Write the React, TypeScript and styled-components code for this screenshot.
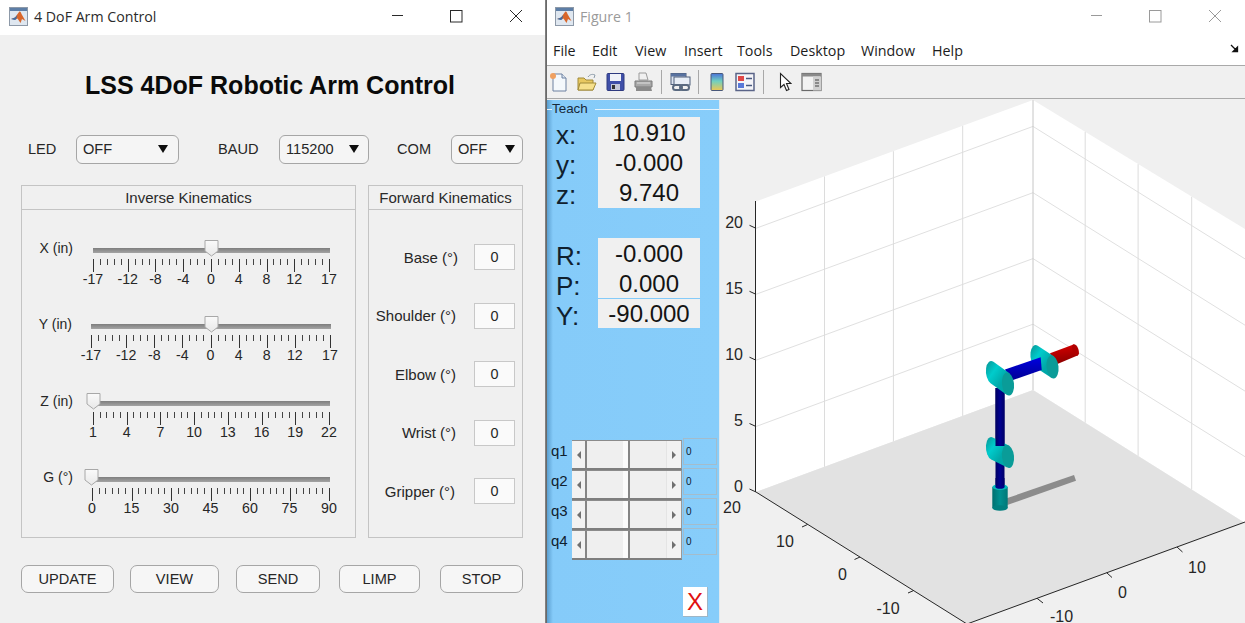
import React from "react";
import styled, { createGlobalStyle } from "styled-components";

const Global = createGlobalStyle`
  html, body { margin: 0; padding: 0; background: #f0f0f0; }
  #root { width: 1245px; height: 623px; overflow: hidden; }
  * { box-sizing: border-box; }
`;

const Screen = styled.div`
  display: flex;
  width: 1245px;
  height: 623px;
  overflow: hidden;
  font-family: "Liberation Sans", Arial, sans-serif;
  color: #262626;
`;

const LeftWindow = styled.div`
  width: 545px;
  height: 623px;
  display: flex;
  flex-direction: column;
  flex: none;
  background: #f0f0f0;
`;
const Divider = styled.div`
  width: 2px;
  flex: none;
  background: linear-gradient(90deg, #8a8a8a, #5f5f5f);
`;
const FigureWindow = styled.div`
  flex: 1;
  min-width: 0;
  display: flex;
  flex-direction: column;
`;

const TitleBar = styled.div<{ $pad: number }>`
  height: 35px;
  flex: none;
  background: #fff;
  display: flex;
  align-items: center;
  padding-left: ${p => p.$pad}px;
  padding-bottom: 3px;
`;
const TitleText = styled.span<{ $dim?: boolean }>`
  font-family: "Open Sans", "Noto Sans", sans-serif;
  font-size: 14.2px;
  margin-left: 6px;
  color: ${p => (p.$dim ? "#9a9a9a" : "#2b2b2b")};
`;
const WinControls = styled.div<{ $gap: number; $right: number }>`
  margin-left: auto;
  display: flex;
  align-items: center;
  gap: ${p => p.$gap}px;
  padding-right: ${p => p.$right}px;
`;

const MainTitle = styled.h1`
  margin: 0;
  height: 100px;
  padding-top: 35px;
  text-align: center;
  font-size: 25px;
  line-height: 30px;
  font-weight: 700;
  color: #0a0a0a;
  padding-right: 5px;
`;

const ControlRow = styled.div`
  display: flex;
  align-items: center;
  height: 28px;
  padding-left: 28px;
`;
const ControlLabel = styled.span<{ $ml?: number; $w: number }>`
  font-size: 14.6px;
  width: ${p => p.$w}px;
  margin-left: ${p => p.$ml || 0}px;
`;
const Dropdown = styled.div<{ $w: number }>`
  width: ${p => p.$w}px;
  height: 29px;
  border: 1px solid #a6a6a6;
  border-radius: 6px;
  background: #f5f5f5;
  display: flex;
  align-items: center;
  justify-content: space-between;
  padding: 0 7px 0 6px;
  font-size: 14.6px;
`;
const Caret = styled.i<{ $mr?: number }>`
  width: 0;
  height: 0;
  border-left: 5.5px solid transparent;
  border-right: 5.5px solid transparent;
  border-top: 8px solid #0d0d0d;
  margin-right: ${p => p.$mr || 0}px;
`;

const Panels = styled.div`
  display: flex;
  gap: 12px;
  padding-left: 21px;
  margin-top: 22px;
`;
const Panel = styled.section<{ $w: number }>`
  width: ${p => p.$w}px;
  height: 353px;
  border: 1px solid #c4c4c4;
  display: flex;
  flex-direction: column;
`;
const PanelHead = styled.header`
  height: 24px;
  flex: none;
  border-bottom: 1px solid #c4c4c4;
  text-align: center;
  font-size: 15px;
  line-height: 23px;
  white-space: nowrap;
  color: #2a2a2a;
`;
const SliderList = styled.div`
  padding-top: 30px;
  display: flex;
  flex-direction: column;
`;
const SliderRow = styled.div`
  display: flex;
  height: 76.3px;
`;
const SliderLabel = styled.div<{ $w: number }>`
  width: ${p => p.$w}px;
  flex: none;
  text-align: right;
  font-size: 14px;
  line-height: 16px;
`;
const SliderBody = styled.div<{ $ml: number; $w: number }>`
  position: relative;
  margin-left: ${p => p.$ml}px;
  width: ${p => p.$w}px;
`;
const Track = styled.div`
  height: 5px;
  margin-top: 8px;
  background: linear-gradient(180deg, #7e7e7e, #a4a4a4);
`;
const Thumb = styled.svg<{ $left: number }>`
  position: absolute;
  left: ${p => p.$left}px;
  top: 0;
`;
const TickSvg = styled.svg`
  display: block;
  margin-top: 6px;
`;
const TickLabels = styled.div`
  display: flex;
  height: 16px;
  line-height: 15px;
`;
const TickLabel = styled.span<{ $gap: number }>`
  flex: none;
  width: 0;
  margin-left: ${p => p.$gap}px;
  white-space: nowrap;
  display: flex;
  justify-content: center;
  font-size: 14.2px;
`;

const JointList = styled.div`
  padding-top: 18px;
  display: flex;
  flex-direction: column;
`;
const JointRow = styled.div<{ $gap: number }>`
  height: 58.5px;
  display: flex;
  align-items: center;
  justify-content: flex-end;
  gap: ${p => p.$gap}px;
  padding-right: 7px;
`;
const JointLabel = styled.span`
  font-size: 15px;
`;
const ValueBox = styled.div`
  width: 41px;
  height: 26px;
  border: 1px solid #c8c8c8;
  background: #fafafa;
  display: flex;
  align-items: center;
  justify-content: center;
  font-size: 14.4px;
`;

const ButtonRow = styled.div`
  display: flex;
  padding-left: 21px;
  margin-top: 27px;
`;
const PushButton = styled.button<{ $w: number; $ml: number }>`
  width: ${p => p.$w}px;
  margin-left: ${p => p.$ml}px;
  height: 28px;
  border: 1px solid #a6a6a6;
  border-radius: 7px;
  background: #f6f6f6;
  font-family: inherit;
  font-size: 14.6px;
  color: #262626;
  padding: 0;
`;

const MenuBar = styled.nav`
  height: 31px;
  flex: none;
  background: #fff;
  border-bottom: 1px solid #a9a9a9;
  display: flex;
  align-items: center;
  position: relative;
`;
const MenuItem = styled.span<{ $w: number }>`
  font-family: "Open Sans", "Noto Sans", sans-serif;
  font-size: 14.3px;
  color: #1c1c1c;
  width: ${p => p.$w}px;
  flex: none;
  padding-left: 6px;
`;
const CornerArrow = styled.svg`
  position: absolute;
  right: 6px;
  top: 9px;
`;

const Toolbar = styled.div`
  height: 33px;
  flex: none;
  background: #f0f0f0;
  border-bottom: 1px solid #a9a9a9;
  display: flex;
  align-items: center;
  padding-left: 2px;
`;
const ToolSep = styled.span<{ $l: number; $r: number }>`
  width: 1px;
  height: 24px;
  background: #a8a8a8;
  margin: 0 ${p => p.$r}px 0 ${p => p.$l}px;
`;
const ToolSlot = styled.svg<{ $ml?: number }>`
  flex: none;
  margin-left: ${p => p.$ml || 0}px;
`;

const Content = styled.div`
  flex: 1;
  display: flex;
  min-height: 0;
  background: #f0f0f0;
  padding-top: 1px;
`;
const TeachPanel = styled.aside`
  width: 173px;
  flex: none;
  background: linear-gradient(90deg, #5b9fd0 0, #85cbf9 6px, #87cdfa 100%);
  display: flex;
  flex-direction: column;
  border-right: 1px solid #dfe9f0;
`;
const TeachHead = styled.div`
  display: flex;
  align-items: center;
  height: 16px;
  margin-top: 1px;
  font-size: 13.4px;
  line-height: 16px;
  color: #17293a;
`;
const TeachTick = styled.span`
  width: 5px;
  height: 1px;
  background: #e6f2fb;
`;
const TeachRule = styled.span`
  flex: 1;
  height: 1px;
  background: #eaf4fb;
  margin-left: 7px;
`;
const ReadoutGroup = styled.div<{ $mt: number }>`
  display: grid;
  grid-template-columns: 51px 102px;
  grid-auto-rows: 30.2px;
  margin-top: ${p => p.$mt}px;
`;
const ReadoutLabel = styled.span`
  font-size: 26px;
  line-height: 36px;
  padding-left: 9px;
  color: #10202e;
`;
const ReadoutValue = styled.span<{ $rule?: boolean }>`
  background: #f0f0f0;
  font-size: 24px;
  line-height: 32px;
  text-align: center;
  color: #141414;
  box-shadow: ${p => (p.$rule ? "inset 0 1px 0 #85cbf9" : "none")};
`;
const JogList = styled.div`
  margin-top: 112px;
  display: flex;
  flex-direction: column;
`;
const JogRow = styled.div`
  height: 30px;
  display: flex;
`;
const JogLabel = styled.span`
  width: 25px;
  flex: none;
  padding-left: 4px;
  font-size: 15px;
  line-height: 22px;
  color: #10202e;
`;
const ScrollBar = styled.div`
  width: 110px;
  height: 30px;
  flex: none;
  display: flex;
  background: #f0f0f0;
  border-top: 1px solid #8b8b8b;
  border-bottom: 2px solid #7e7e7e;
  border-right: 1px solid #9a9a9a;
`;
const ScrollButton = styled.div<{ $left?: boolean }>`
  width: 15px;
  flex: none;
  display: flex;
  align-items: center;
  justify-content: center;
  background: #f2f2f2;
  border-right: ${p => (p.$left ? "2px solid #858585" : "0")};
  border-left: ${p => (p.$left ? "0" : "1px solid #e4e4e4")};
`;
const ArrowLeft = styled.i`
  border-top: 4px solid transparent;
  border-bottom: 4px solid transparent;
  border-right: 4px solid #707070;
`;
const ArrowRight = styled.i`
  border-top: 4px solid transparent;
  border-bottom: 4px solid transparent;
  border-left: 4px solid #707070;
`;
const ScrollTrack = styled.div`
  flex: 1;
  background: #efefef;
`;
const ScrollThumb = styled.div`
  width: 7px;
  flex: none;
  background: #fbfbfb;
  border-right: 2px solid #858585;
`;
const JogValue = styled.div`
  width: 34px;
  height: 27px;
  margin: -2px 0 0 1px;
  border: 1px solid #a4bccb;
  font-size: 10px;
  line-height: 25px;
  padding-left: 2px;
  color: #10202e;
`;
const CloseWrap = styled.div`
  margin-top: 27px;
  padding-left: 136px;
`;
const CloseBtn = styled.button`
  width: 25px;
  height: 30px;
  padding: 0;
  background: #fff;
  border: 0;
  border-right: 1px solid #9eb6c6;
  border-bottom: 1px solid #9eb6c6;
  color: #e01010;
  font-family: inherit;
  font-size: 24px;
  line-height: 30px;
`;
const PlotArea = styled.div`
  flex: 1;
  min-width: 0;
  background: #f0f0f0;
`;
const PlotSvg = styled.svg`
  display: block;
`;

const MatlabIcon = () => (
  <svg width="19" height="19" viewBox="0 0 19 19">
    <rect x=".5" y=".5" width="18" height="18" fill="#dfe7f0" stroke="#8d99a8" />
    <rect x="1" y="1" width="17" height="3" fill="#5d7ea6" />
    <path d="M2 12l4-1.5L10 5c1-1 1.500-.5 2.500 2l4 7-3.500-2-1.500 4-3-4.500-2 1z" fill="#d9662a" />
    <path d="M2 12l4-1.500L8.500 8 7 12.500 5.500 13z" fill="#3c6ea8" />
  </svg>
);

const WinGlyphs: React.FC<{ color: string }> = ({ color }) => (
  <>
    <svg width="13" height="13" viewBox="0 0 13 13"><path d="M1 5.500h11" stroke={color} strokeWidth="1" /></svg>
    <svg width="13" height="13" viewBox="0 0 13 13"><rect x=".5" y=".5" width="11.500" height="11.500" fill="none" stroke={color} /></svg>
    <svg width="14" height="14" viewBox="0 0 14 14"><path d="M1 1l12 12M13 1L1 13" stroke={color} strokeWidth="1" /></svg>
  </>
);

type SliderDef = {
  label: string; labelW: number; ml: number; w: number; min: number; max: number;
  marks: number[]; minorStep: number; thumb: number;
};
const xMarks = [-17, -12, -8, -4, 0, 4, 8, 12, 17];
const sliders: SliderDef[] = [
  { label: "X (in)", labelW: 51, ml: 20, w: 237, min: -17, max: 17, marks: xMarks, minorStep: 1, thumb: 111 },
  { label: "Y (in)", labelW: 50, ml: 19, w: 240, min: -17, max: 17, marks: xMarks, minorStep: 1, thumb: 113 },
  { label: "Z (in)", labelW: 51, ml: 20, w: 237, min: 1, max: 22, marks: [1, 4, 7, 10, 13, 16, 19, 22], minorStep: 0.6, thumb: -7 },
  { label: "G (°)", labelW: 51, ml: 19, w: 238, min: 0, max: 90, marks: [0, 15, 30, 45, 60, 75, 90], minorStep: 2.5, thumb: -8 },
];

const Slider: React.FC<{ s: SliderDef }> = ({ s }) => {
  const px = (v: number) => ((v - s.min) / (s.max - s.min)) * (s.w - 1);
  const lines: React.ReactNode[] = [];
  const count = Math.round((s.max - s.min) / s.minorStep);
  for (let i = 0; i <= count; i++) {
    const x = Math.round(px(s.min + i * s.minorStep)) + 0.5;
    lines.push(<line key={`m${i}`} x1={x} x2={x} y1="0" y2="6" stroke="#444" />);
  }
  s.marks.forEach(m => {
    const x = Math.round(px(m)) + 0.5;
    lines.push(<line key={`M${m}`} x1={x} x2={x} y1="0" y2="13" stroke="#333" />);
  });
  return (
    <SliderRow>
      <SliderLabel $w={s.labelW}>{s.label}</SliderLabel>
      <SliderBody $ml={s.ml} $w={s.w}>
        <Track />
        <Thumb $left={s.thumb} width="15" height="17" viewBox="0 0 15 17">
          <defs>
            <linearGradient id="thumbFill" x1="0" x2="0" y1="0" y2="1">
              <stop offset="0" stopColor="#fafafa" />
              <stop offset="1" stopColor="#e8e8e8" />
            </linearGradient>
          </defs>
          <path d="M1 .5h13v10.500L7.500 16 1 11z" fill="url(#thumbFill)" stroke="#a8a8a8" />
        </Thumb>
        <TickSvg width={s.w} height="13">{lines}</TickSvg>
        <TickLabels>
          {s.marks.map((m, i) => (
            <TickLabel key={m} $gap={i === 0 ? 0 : px(m) - px(s.marks[i - 1])}>{m}</TickLabel>
          ))}
        </TickLabels>
      </SliderBody>
    </SliderRow>
  );
};

const Cylinder: React.FC<{ ax: number; ay: number; bx: number; by: number; rx: number; ry: number; rot: number; face: string }> =
  ({ ax, ay, bx, by, rx, ry, rot, face }) => {
    const r = (rot * Math.PI) / 180;
    const dx = bx - ax;
    const dy = by - ay;
    const lx = dx * Math.cos(r) + dy * Math.sin(r);
    const ly = -dx * Math.sin(r) + dy * Math.cos(r);
    const nx = ly;
    const ny = -lx;
    const k = Math.hypot(rx * nx, ry * ny);
    const px = (rx * rx * nx) / k;
    const py = (ry * ry * ny) / k;
    const ux = px * Math.cos(r) - py * Math.sin(r);
    const uy = px * Math.sin(r) + py * Math.cos(r);
    const body = `M${ax + ux} ${ay + uy}L${bx + ux} ${by + uy}L${bx - ux} ${by - uy}L${ax - ux} ${ay - uy}A${rx} ${ry} ${rot} 0 1 ${ax + ux} ${ay + uy}Z`;
    return (
      <g>
        <path d={body} fill="url(#tealBody)" />
        <ellipse cx={bx} cy={by} rx={rx} ry={ry} transform={`rotate(${rot} ${bx} ${by})`} fill={face} />
      </g>
    );
  };

const AxisText: React.FC<{ x: number; y: number; a?: "middle" | "end"; children: React.ReactNode }> = ({ x, y, a = "middle", children }) => (
  <text x={x} y={y + 6} textAnchor={a} fontSize="16" fontFamily="'Liberation Sans', Arial, sans-serif" fill="#262626">{children}</text>
);

const Plot = () => {
  const leftZ = [[228.3,126.4],[294.3,192.7],[360.2,258.6],[426.5,324.2]];
  const rightBack = [126.4,192.7,258.6,324.2];
  const leftV = [824.5,893.4,962.7];
  const rightV = [1085.2,1138.1,1191.7];
  return (
    <PlotSvg width="525" height="523" viewBox="720 100 525 523">
      <defs>
        <linearGradient id="tealBody" x1="0" x2="0.6" y1="0.1" y2="0.7">
          <stop offset="0" stopColor="#089c9c" />
          <stop offset=".45" stopColor="#00cccc" />
          <stop offset="1" stopColor="#00a8a8" />
        </linearGradient>
        <linearGradient id="baseCyl" x1="0" x2="1" y1="0" y2="0">
          <stop offset="0" stopColor="#006f6f" />
          <stop offset=".5" stopColor="#009090" />
          <stop offset="1" stopColor="#007878" />
        </linearGradient>
        <linearGradient id="navy" x1="0" x2="1" y1="0" y2="0">
          <stop offset="0" stopColor="#000060" />
          <stop offset=".5" stopColor="#000090" />
          <stop offset="1" stopColor="#000068" />
        </linearGradient>
        <linearGradient id="blueBar" x1="0" x2="0" y1="0" y2="1">
          <stop offset="0" stopColor="#0000e0" />
          <stop offset="1" stopColor="#000090" />
        </linearGradient>
        <linearGradient id="redBar" x1="0" x2="0.2" y1="0" y2="1">
          <stop offset="0" stopColor="#dd0000" />
          <stop offset="1" stopColor="#8a0000" />
        </linearGradient>
      </defs>
      <polygon points="756,201.500 1033,100 1033,390 756,492" fill="#fff" />
      <polygon points="1033,100 1245,229 1245,523 1033,390" fill="#fff" />
      <polygon points="756,492 1033,390 1245,523 967,624" fill="#e2e2e2" />
      {leftZ.map(([a, b]) => <line key={a} x1="756" y1={a} x2="1033" y2={b} stroke="#e0e0e0" />)}
      {rightBack.map(b => <line key={b} x1="1033" y1={b} x2="1245" y2={b + 132.5} stroke="#e0e0e0" />)}
      {leftV.map(x => (
        <line key={x} x1={x} x2={x} y1={201.5 - (x - 756) * 0.366} y2={492 - (x - 756) * 0.368} stroke="#dcdcdc" />
      ))}
      {rightV.map(x => (
        <line key={x} x1={x} x2={x} y1={100 + (x - 1033) * 0.61} y2={390 + (x - 1033) * 0.627} stroke="#dcdcdc" />
      ))}
      <line x1="1033" x2="1033" y1="100" y2="390" stroke="#c6c6c6" />

      <g stroke="#262626" strokeWidth="1" fill="none">
        <line x1="755.500" x2="755.500" y1="201" y2="492" />
        <line x1="756" y1="492" x2="967" y2="624" />
        <line x1="967" y1="624" x2="1245" y2="522" />
        <path d="M749.500 225.300L756 228.300M749.500 291.300L756 294.300M749.500 357.200L756 360.200M749.500 423.500L756 426.500M749.500 489L756 492" />
        <path d="M807.700 524.400L802 527M860 557L854.500 559.500M913.500 590.600L908 593" />
        <path d="M1177 547L1182.500 552M1106.700 572.700L1112 577.500M1037 598.300L1043 603" />
      </g>
      <AxisText x={743} y={222} a="end">20</AxisText>
      <AxisText x={743} y={288} a="end">15</AxisText>
      <AxisText x={743} y={354} a="end">10</AxisText>
      <AxisText x={743} y={420} a="end">5</AxisText>
      <AxisText x={743} y={486} a="end">0</AxisText>
      <AxisText x={732} y={507}>20</AxisText>
      <AxisText x={785} y={541}>10</AxisText>
      <AxisText x={842.500} y={574}>0</AxisText>
      <AxisText x={888} y={608}>-10</AxisText>
      <AxisText x={1197} y={567}>10</AxisText>
      <AxisText x={1122.500} y={592}>0</AxisText>
      <AxisText x={1061.500} y={616}>-10</AxisText>

      <polygon points="1006.700,498.300 1074,475 1076,480.700 1007.300,505" fill="#8c8c8c" />
      <rect x="995.500" y="388" width="9" height="99" fill="url(#navy)" />
      <polygon points="1050,353.300 1073.500,344.500 1077.500,355.500 1055,365" fill="url(#redBar)" />
      <ellipse cx="1075.500" cy="350" rx="3" ry="6" transform="rotate(-20 1075.500 350)" fill="#b00000" />
      <Cylinder ax={992} ay={448.500} bx={1008} by={456.500} rx={6} ry={11.500} rot={-6} face="#0a9c98" />
      <rect x="995.500" y="388" width="9" height="58" fill="url(#navy)" />
      <Cylinder ax={1036.500} ay={356.500} bx={1052.500} by={367} rx={6} ry={11.500} rot={-6} face="#0a9c98" />
      <polygon points="1005,369.500 1040.700,357.300 1041.700,370 1010,381" fill="url(#blueBar)" />
      <Cylinder ax={992} ay={372.500} bx={1008} by={384} rx={6} ry={11.500} rot={-6} face="#0a9c98" />
      <rect x="992.300" y="487" width="15.400" height="21" fill="url(#baseCyl)" />
      <ellipse cx="1000" cy="508" rx="7.700" ry="2.800" fill="#007f7f" />
      <ellipse cx="1000" cy="487" rx="7.700" ry="3" fill="#00bcbc" />
      <rect x="995.500" y="478" width="9" height="9" fill="url(#navy)" />
      <ellipse cx="1000" cy="487" rx="4.500" ry="1.800" fill="#00008a" />
    </PlotSvg>
  );
};

const NewIcon = () => (
  <ToolSlot width="20" height="20" viewBox="0 0 20 20">
    <path d="M4 2h9l4 4v13H4z" fill="#f4f8fc" stroke="#6d80a0" />
    <path d="M13 2v4h4" fill="#dde6f0" stroke="#6d80a0" />
    <circle cx="4" cy="4" r="3" fill="#f0a060" />
  </ToolSlot>
);
const OpenIcon = () => (
  <ToolSlot $ml={8} width="20" height="20" viewBox="0 0 20 20">
    <path d="M11 5c2-3 5-3 7-2l-1 3" fill="none" stroke="#8a9aa8" />
    <path d="M1 6h6l2 2h7v10H1z" fill="#e8c860" stroke="#a08a3a" />
    <path d="M1 18l2-7h16l-3 7z" fill="#f6e08c" stroke="#a08a3a" />
  </ToolSlot>
);
const SaveIcon = () => (
  <ToolSlot $ml={9} width="19" height="20" viewBox="0 0 19 20">
    <rect x="1" y="1.500" width="17" height="17" rx="1" fill="#3f4fa8" stroke="#2e3a80" />
    <rect x="4" y="2" width="11" height="7" fill="#f0f2f8" />
    <rect x="5" y="12" width="9" height="6" fill="#c4c8d8" />
    <rect x="6" y="13" width="3" height="4" fill="#333" />
  </ToolSlot>
);
const PrintIcon = () => (
  <ToolSlot $ml={9} width="19" height="20" viewBox="0 0 19 20">
    <path d="M5 1h7l2 7H5z" fill="#f0f0f0" stroke="#9a9a9a" />
    <path d="M1 9h17v6H1z" fill="#a8a8a8" stroke="#7a7a7a" />
    <path d="M2 15h15l1 4H2z" fill="#8a8a8a" />
    <path d="M3 11h13" stroke="#e0e0e0" />
  </ToolSlot>
);
const LinkIcon = () => (
  <ToolSlot width="21" height="20" viewBox="0 0 21 20">
    <rect x="1" y="1.500" width="15" height="11" fill="#dce4f0" stroke="#4e5f7a" />
    <rect x="1" y="1.500" width="15" height="3" fill="#5872a0" />
    <rect x="4" y="5" width="16" height="8" fill="#e8eef6" stroke="#4e5f7a" />
    <rect x="3" y="13" width="9" height="5" rx="2.500" fill="none" stroke="#5a6a80" strokeWidth="2" />
    <rect x="10" y="13" width="9" height="5" rx="2.500" fill="none" stroke="#5a6a80" strokeWidth="2" />
  </ToolSlot>
);
const ColorbarIcon = () => (
  <ToolSlot width="14" height="20" viewBox="0 0 14 20">
    <defs>
      <linearGradient id="cb" x1="0" x2="0" y1="0" y2="1">
        <stop offset="0" stopColor="#4a72d8" />
        <stop offset=".45" stopColor="#70d0c0" />
        <stop offset="1" stopColor="#f0c850" />
      </linearGradient>
    </defs>
    <rect x="1" y="1.500" width="12" height="17" rx="1" fill="url(#cb)" stroke="#48587a" />
  </ToolSlot>
);
const LegendIcon = () => (
  <ToolSlot $ml={11} width="20" height="20" viewBox="0 0 20 20">
    <rect x="1" y="1.500" width="18" height="17" fill="#f4f4f8" stroke="#5a6488" strokeWidth="1.500" />
    <rect x="3" y="4" width="6" height="5" fill="#e04848" />
    <rect x="3" y="11" width="6" height="5" fill="#5878d8" />
    <path d="M11 6.500h6M11 13.500h6" stroke="#4a5a80" strokeWidth="1.500" />
  </ToolSlot>
);
const CursorIcon = () => (
  <ToolSlot width="13" height="20" viewBox="0 0 13 20">
    <path d="M1.500 1.500v14l3.500-3 2.500 6 2.500-1-2.500-6h4.500z" fill="#fff" stroke="#222" strokeWidth="1.100" />
  </ToolSlot>
);
const PanelIcon = () => (
  <ToolSlot $ml={9} width="21" height="20" viewBox="0 0 21 20">
    <rect x="1" y="1.500" width="19" height="17" fill="#f2f2f2" stroke="#6a6a6a" strokeWidth="1.200" />
    <rect x="1" y="1.500" width="19" height="3" fill="#8a8a8a" />
    <rect x="12" y="4.500" width="8" height="14" fill="#d0d0d0" />
    <path d="M14 8h4M14 11h4M14 14h4" stroke="#444" />
  </ToolSlot>
);

const readouts1 = [["x:", "10.910"], ["y:", "-0.000"], ["z:", "9.740"]];
const readouts2 = [["R:", "-0.000"], ["P:", "0.000"], ["Y:", "-90.000"]];
const menus: [string, number][] = [["File",39],["Edit",43],["View",49],["Insert",53],["Tools",53],["Desktop",71],["Window",71],["Help",60]];
const joints: [string, number][] = [["Base (°)",16],["Shoulder (°)",18],["Elbow (°)",18],["Wrist (°)",18],["Gripper (°)",19]];
const buttons: [string, number, number][] = [["UPDATE",93,0],["VIEW",89,16],["SEND",84,17],["LIMP",81,19],["STOP",83,20]];

export default function App() {
  return (
    <>
      <Global />
      <Screen>
        <LeftWindow>
          <TitleBar $pad={9}>
            <MatlabIcon />
            <TitleText>4 DoF Arm Control</TitleText>
            <WinControls $gap={46} $right={22}><WinGlyphs color="#2a2a2a" /></WinControls>
          </TitleBar>
          <MainTitle>LSS 4DoF Robotic Arm Control</MainTitle>
          <ControlRow>
            <ControlLabel $w={48}>LED</ControlLabel>
            <Dropdown $w={103}>OFF<Caret $mr={3} /></Dropdown>
            <ControlLabel $ml={39} $w={61}>BAUD</ControlLabel>
            <Dropdown $w={90}>115200<Caret $mr={2} /></Dropdown>
            <ControlLabel $ml={28} $w={54}>COM</ControlLabel>
            <Dropdown $w={72}>OFF<Caret /></Dropdown>
          </ControlRow>
          <Panels>
            <Panel $w={335}>
              <PanelHead>Inverse Kinematics</PanelHead>
              <SliderList>
                {sliders.map(s => <Slider key={s.label} s={s} />)}
              </SliderList>
            </Panel>
            <Panel $w={155}>
              <PanelHead>Forward Kinematics</PanelHead>
              <JointList>
                {joints.map(([j, g]) => (
                  <JointRow key={j} $gap={g}>
                    <JointLabel>{j}</JointLabel>
                    <ValueBox>0</ValueBox>
                  </JointRow>
                ))}
              </JointList>
            </Panel>
          </Panels>
          <ButtonRow>
            {buttons.map(([t, w, ml]) => <PushButton key={t} $w={w} $ml={ml}>{t}</PushButton>)}
          </ButtonRow>
        </LeftWindow>
        <Divider />
        <FigureWindow>
          <TitleBar $pad={8}>
            <MatlabIcon />
            <TitleText $dim>Figure 1</TitleText>
            <WinControls $gap={46} $right={23}><WinGlyphs color="#9a9a9a" /></WinControls>
          </TitleBar>
          <MenuBar>
            {menus.map(([m, w]) => <MenuItem key={m} $w={w}>{m}</MenuItem>)}
            <CornerArrow width="9" height="9" viewBox="0 0 9 9">
              <path d="M1 1l5 5M7.500 3v4.500H3z" stroke="#111" strokeWidth="1.300" fill="#111" />
            </CornerArrow>
          </MenuBar>
          <Toolbar>
            <NewIcon /><OpenIcon /><SaveIcon /><PrintIcon />
            <ToolSep $l={8} $r={8} />
            <LinkIcon />
            <ToolSep $l={7} $r={11} />
            <ColorbarIcon /><LegendIcon />
            <ToolSep $l={8} $r={15} />
            <CursorIcon /><PanelIcon />
          </Toolbar>
          <Content>
            <TeachPanel>
              <TeachHead>
                <TeachTick />Teach<TeachRule />
              </TeachHead>
              <ReadoutGroup $mt={0}>
                {readouts1.map(([l, v]) => (
                  <React.Fragment key={l}>
                    <ReadoutLabel>{l}</ReadoutLabel>
                    <ReadoutValue>{v}</ReadoutValue>
                  </React.Fragment>
                ))}
              </ReadoutGroup>
              <ReadoutGroup $mt={30}>
                {readouts2.map(([l, v]) => (
                  <React.Fragment key={l}>
                    <ReadoutLabel>{l}</ReadoutLabel>
                    <ReadoutValue $rule={l === "Y:"}>{v}</ReadoutValue>
                  </React.Fragment>
                ))}
              </ReadoutGroup>
              <JogList>
                {["q1","q2","q3","q4"].map(q => (
                  <JogRow key={q}>
                    <JogLabel>{q}</JogLabel>
                    <ScrollBar>
                      <ScrollButton $left><ArrowLeft /></ScrollButton>
                      <ScrollTrack />
                      <ScrollThumb />
                      <ScrollTrack />
                      <ScrollButton><ArrowRight /></ScrollButton>
                    </ScrollBar>
                    <JogValue>0</JogValue>
                  </JogRow>
                ))}
              </JogList>
              <CloseWrap><CloseBtn>X</CloseBtn></CloseWrap>
            </TeachPanel>
            <PlotArea><Plot /></PlotArea>
          </Content>
        </FigureWindow>
      </Screen>
    </>
  );
}
